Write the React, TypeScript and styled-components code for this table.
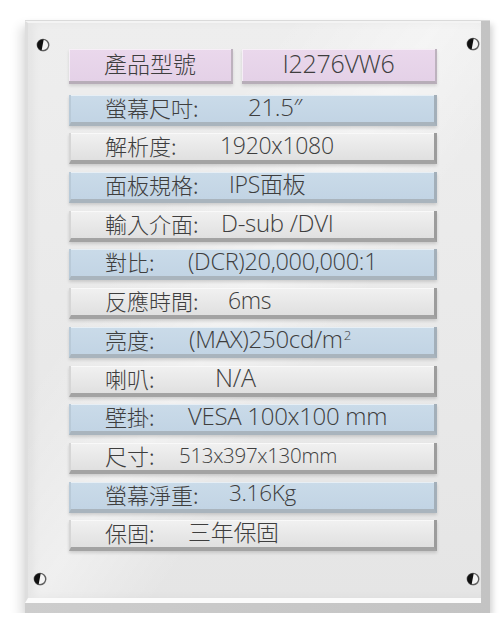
import React from "react"
import styled, { createGlobalStyle } from "styled-components"

type Tone = "blue" | "gray"

type Spec = {
	label: string
	value: React.ReactNode
	tone: Tone
	at: number // where the value starts, from the row's left edge
	size: number
}

// defined up here because the spec list below uses it
const Sup = styled.span`
	font-size: 0.55em;
	vertical-align: 0.6em;
	margin-left: 1px;
`

const specs: Spec[] = [
	{ label: "螢幕尺吋:", value: "21.5″", tone: "blue", at: 177, size: 24 },
	{ label: "解析度:", value: "1920x1080", tone: "gray", at: 149, size: 23 },
	{ label: "面板規格:", value: "IPS面板", tone: "blue", at: 158, size: 23 },
	{ label: "輸入介面:", value: "D-sub /DVI", tone: "gray", at: 150, size: 24 },
	{ label: "對比:", value: "(DCR)20,000,000:1", tone: "blue", at: 117, size: 23.5 },
	{ label: "反應時間:", value: "6ms", tone: "gray", at: 157, size: 23 },
	{
		label: "亮度:",
		value: (
			<>
				(MAX)250cd/m<Sup>2</Sup>
			</>
		),
		tone: "blue",
		at: 118,
		size: 24,
	},
	{ label: "喇叭:", value: "N/A", tone: "gray", at: 144, size: 25 },
	{ label: "壁掛:", value: "VESA 100x100 mm", tone: "blue", at: 117, size: 24 },
	{ label: "尺寸:", value: "513x397x130mm", tone: "gray", at: 108, size: 20.5 },
	{ label: "螢幕淨重:", value: "3.16Kg", tone: "blue", at: 158, size: 22.5 },
	{ label: "保固:", value: "三年保固", tone: "gray", at: 117, size: 23 },
]

const Screw = () => (
	<svg width="14" height="14" viewBox="0 0 14 14">
		<circle cx="7.5" cy="7.6" r="6" fill="rgba(0,0,0,0.2)" />
		<circle cx="7" cy="7" r="5.7" fill="#f4f4f4" stroke="#5e5e5e" strokeWidth="1.3" />
		<path d="M7.7 1.6 L5.6 12.4 A5.4 5.4 0 0 1 7.7 1.6 Z" fill="#111" />
	</svg>
)

const App = () => {
	return (
		<>
			<GlobalStyle />
			<Board>
				<Face>
					<ScrewAt $x={8} $y={15}><Screw /></ScrewAt>
					<ScrewAt $x={438} $y={14}><Screw /></ScrewAt>
					<ScrewAt $x={5} $y={549}><Screw /></ScrewAt>
					<ScrewAt $x={438} $y={549}><Screw /></ScrewAt>
					<Sheet>
						<Header>
							<HeaderCell $w={164}>產品型號</HeaderCell>
							<HeaderCell $w={195}>
								<Latin $size={25}>I2276VW6</Latin>
							</HeaderCell>
						</Header>
						{specs.map((s) => (
							<Row key={s.label} $tone={s.tone}>
								<Label $w={s.at - 34}>{s.label}</Label>
								<Latin $size={s.size}>{s.value}</Latin>
							</Row>
						))}
					</Sheet>
				</Face>
			</Board>
		</>
	)
}

export default App

const GlobalStyle = createGlobalStyle`
	body {
		margin: 0;
		background: #ffffff;
		font-family: "Noto Sans CJK TC", sans-serif;
	}
`

const Board = styled.div`
	width: 465px;
	height: 593px;
	margin: 20px 0 0 25px;

	display: flex;
	flex-direction: column;
	box-sizing: border-box;

	background: linear-gradient(90deg, #cdcdcd, #c3c3c3);
	border-top: 1px solid #dadada;
	box-shadow: -5px 6px 10px rgba(0, 0, 0, 0.12), 3px 4px 6px rgba(0, 0, 0, 0.14);
`

const Face = styled.div`
	position: relative;
	flex: 1;
	margin: 0 9px 10px 0;

	background:
		linear-gradient(125deg, rgba(255, 255, 255, 0) 30%, rgba(255, 255, 255, 0.4) 48%, rgba(255, 255, 255, 0) 62%),
		linear-gradient(180deg, #eeeeee 0%, #e9e9e9 60%, #e5e5e5 100%);
	border-left: 3px solid #dedede;
	border-top: 2px solid #f4f4f4;
	border-bottom: 5px solid #fbfbfb;
	box-shadow: inset 6px 0 8px rgba(0, 0, 0, 0.04);
`

const ScrewAt = styled.div<{ $x: number; $y: number }>`
	position: absolute;
	left: ${(p) => p.$x}px;
	top: ${(p) => p.$y}px;
	width: 14px;
	height: 14px;
	line-height: 0;
`

const Sheet = styled.div`
	width: 368px;
	padding: 26px 0 0 41px;

	display: flex;
	flex-direction: column;
	gap: 7.7px;
`

const Header = styled.div`
	display: flex;
	gap: 9px;
	margin-bottom: 3px;
`

const HeaderCell = styled.div<{ $w: number }>`
	width: ${(p) => p.$w}px;
	height: 35px;
	box-sizing: border-box;

	display: flex;
	align-items: center;
	justify-content: center;
	padding-bottom: 3px;

	color: #3e3e3e;
	font-size: 23px;
	font-weight: 300;
	line-height: 1;

	background: linear-gradient(180deg, #ead8ec, #e4d1e7);
	border-right: 2px solid #bdb2be;
	border-bottom: 3px solid #b7adb8;
	box-shadow: inset 1px 1px 0 rgba(255, 255, 255, 0.6), 0 2px 3px rgba(0, 0, 0, 0.12);
`

const Row = styled.div<{ $tone: Tone }>`
	height: 31px;
	box-sizing: border-box;

	display: flex;
	align-items: center;
	padding: 0 0 3px 34px;

	color: #3e3e3e;

	background: ${(p) =>
		p.$tone === "blue"
			? "linear-gradient(180deg, #cadbe9, #c2d4e4)"
			: "linear-gradient(180deg, #f1f1f1, #e0e0e0)"};
	border-left: 2px solid ${(p) => (p.$tone === "blue" ? "#b9cad8" : "#d6d6d6")};
	border-right: 3px solid ${(p) => (p.$tone === "blue" ? "#a3afb9" : "#9c9c9c")};
	border-bottom: 4px solid ${(p) => (p.$tone === "blue" ? "#a9b4bd" : "#a3a3a3")};
	box-shadow: inset 0 1px 0 rgba(255, 255, 255, 0.55), 0 2px 3px rgba(0, 0, 0, 0.14);
`

const Label = styled.span<{ $w: number }>`
	flex: 0 0 ${(p) => p.$w}px;

	font-size: 22px;
	font-weight: 300;
	line-height: 1;
	white-space: nowrap;
`

const Latin = styled.span<{ $size: number }>`
	font-family: "Open Sans", "Noto Sans CJK TC", sans-serif;
	font-size: ${(p) => p.$size}px;
	font-weight: 300;
	line-height: 1;
	letter-spacing: -0.3px;
	white-space: nowrap;
`
